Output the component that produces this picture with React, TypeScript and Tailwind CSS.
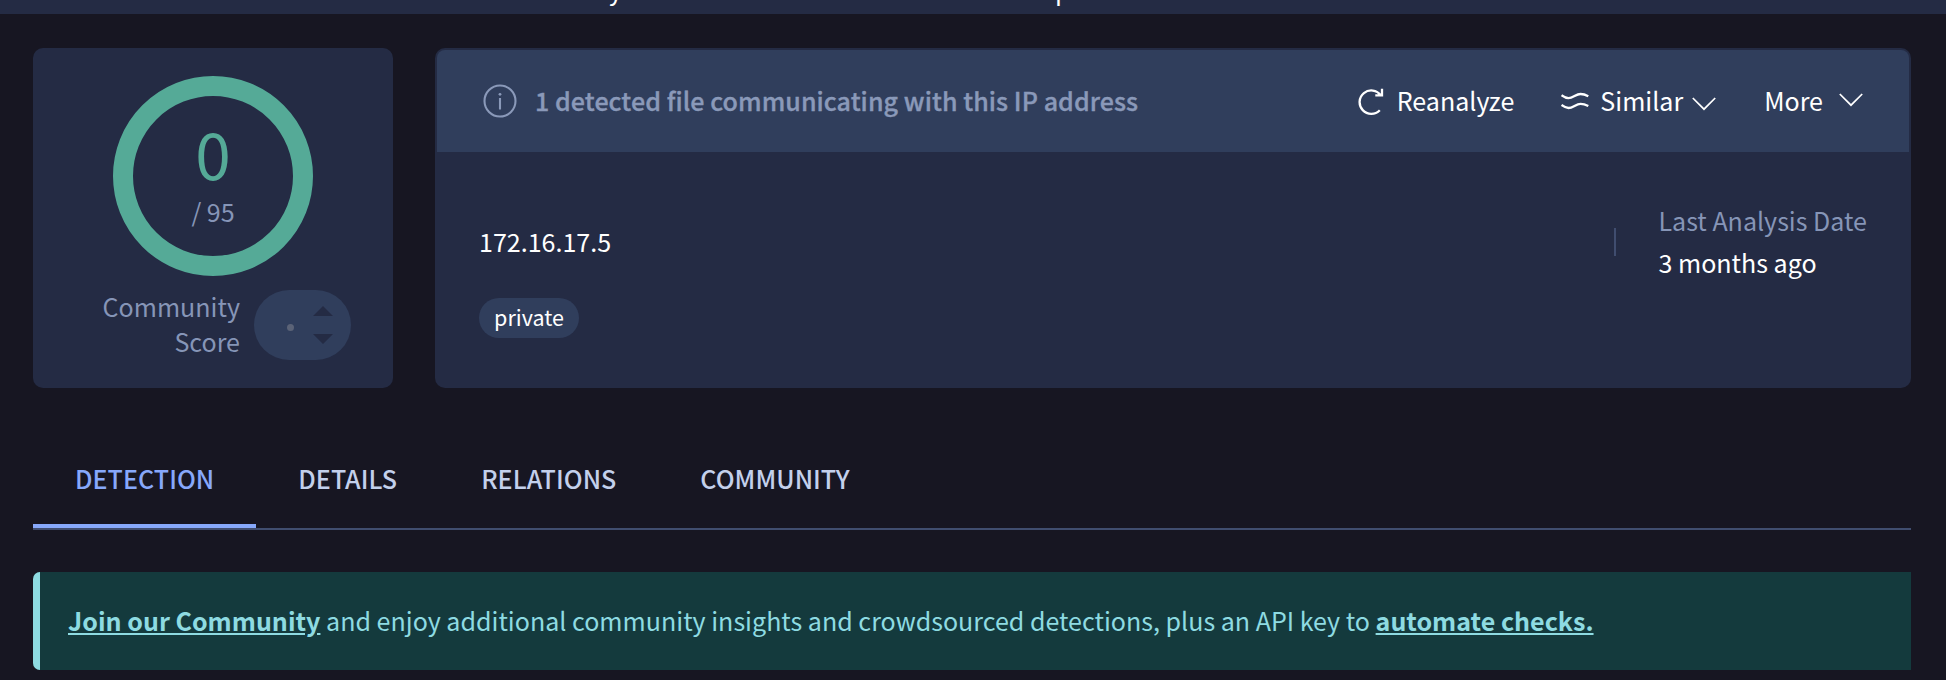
import type { ReactNode } from "react";

function Chevron() {
  return (
    <svg width="24" height="14" viewBox="0 0 24 14" fill="none" stroke="#fff" strokeWidth="1.7">
      <path d="M.8 1 12 12.2 23.2 1" />
    </svg>
  );
}

function Tab({ children, active = false }: { children: ReactNode; active?: boolean }) {
  return (
    <div className={active ? "flex h-[94px] items-center border-b-4 border-[#87a8fb] px-[42px] pb-[2px] text-[#87a8fb]" : "flex h-[94px] items-center border-b-4 border-transparent px-[42px] pb-[2px]"}>
      {children}
    </div>
  );
}

export default function App() {
  return (
    <div className="flex h-[680px] w-[1946px] flex-col overflow-hidden bg-[#171622] font-['Noto_Sans_CJK_SC',sans-serif] text-[25.05px] leading-[35px] text-white">
      <header className="flex h-[14px] shrink-0 items-end overflow-hidden bg-[#242b44] pb-[7px] pl-[609px]">
        <span className="w-[446px]">y</span>
        <span>p</span>
      </header>
      <div className="mt-[34px] flex h-[340px] shrink-0 gap-[42px] pl-[33px] pr-[35px]">
        <section className="flex w-[360px] flex-col items-center rounded-[10px] bg-[#242b44] pt-7">
          <div className="flex size-[200px] flex-col items-center rounded-full border-[20px] border-[#55aa97]">
            <span className="mt-[21px] text-[64px] leading-[70px] text-[#55aa97]">0</span>
            <span className="mt-[7px] text-[#8695b7]">/ 95</span>
          </div>
          <div className="mt-[14px] flex w-full items-center justify-end gap-[14px] pr-[42px]">
            <p className="-mt-[2px] text-right text-[#8695b7]">Community<br />Score</p>
            <div className="flex h-[70px] w-[97px] items-center justify-end gap-[19px] rounded-full bg-[#303e5c] pr-[18px]">
              <span className="mt-[5px] size-[7px] rounded-full bg-[#5b6377]" />
              <svg width="20" height="38" viewBox="0 0 20 38" fill="#242b44">
                <path d="M0 10 10 0 20 10ZM0 28 10 38 20 28Z" />
              </svg>
            </div>
          </div>
        </section>
        <section className="flex min-w-0 flex-1 flex-col overflow-hidden rounded-[10px] bg-[#242b44]">
          <div className="mx-[2px] mt-[2px] flex h-[102px] shrink-0 items-center rounded-t-[8px] bg-[#303e5c] pl-[46px]">
            <svg width="34" height="34" viewBox="0 0 34 34" fill="none" stroke="#8a99b9" strokeWidth="2.1">
              <circle cx="17" cy="17" r="15.5" />
              <path d="M17 14V25.5" />
              <circle cx="17" cy="10.3" r="1.4" fill="#8a99b9" stroke="none" />
            </svg>
            <span className="-mt-[2px] ml-[18px] font-medium tracking-[0.06px] text-[#8a99b9] [-webkit-text-stroke:0.35px_#8a99b9]">1 detected file communicating with this IP address</span>
            <div className="ml-auto flex items-center pr-[46px]">
              <svg width="28" height="28" viewBox="0 0 28 28" fill="none" stroke="#fff" strokeWidth="2.3">
                <path d="M22.8 23.2A11.7 11.7 0 1 1 23.8 8.3M25 1.7V8.3H18.3" />
              </svg>
              <span className="-mt-[2px] ml-[12px]">Reanalyze</span>
              <svg className="ml-[47px]" width="28" height="20" viewBox="0 0 28 20" fill="none" stroke="#fff" strokeWidth="2.3">
                <path d="M.5 4.2C3 6 5 7.2 7.5 7.2 12 7.2 15 3 19.5 3 22.5 3 25 4 27.3 5.2M.5 14C3 15.8 5 17 7.5 17 12 17 15 12.8 19.5 12.8 22.5 12.8 25 13.8 27.3 15" />
              </svg>
              <span className="-mt-[2px] ml-[11px] mr-[9px]">Similar</span>
              <span className="mt-[5px] flex"><Chevron /></span>
              <span className="-mt-[2px] ml-[48px] mr-[16px]">More</span>
              <span className="-mt-[2px] flex"><Chevron /></span>
            </div>
          </div>
          <div className="flex flex-1 justify-between px-[44px]">
            <div className="flex flex-col items-start pt-[72px]">
              <span>172.16.17.5</span>
              <span className="mt-[39px] flex h-10 w-[100px] items-center justify-center rounded-full bg-[#303e5c] pb-[3px] text-[21.5px]">private</span>
            </div>
            <div className="flex items-start pt-[47px]">
              <span className="mr-[42px] mt-[29px] h-7 w-[2px] bg-[#404d6f]" />
              <p className="leading-[42px]"><span className="text-[#8695b7]">Last Analysis Date</span><br />3 months ago</p>
            </div>
          </div>
        </section>
      </div>
      <nav className="ml-[33px] mr-[35px] mt-[46px] flex h-[96px] shrink-0 border-b-2 border-[#404d6f] font-medium tracking-[0.04px] text-[#c3d0ec]">
        <Tab active>DETECTION</Tab>
        <Tab>DETAILS</Tab>
        <Tab>RELATIONS</Tab>
        <Tab>COMMUNITY</Tab>
      </nav>
      <div className="ml-[33px] mr-[35px] mt-[42px] flex h-[98px] shrink-0 overflow-hidden rounded-l-[7px] bg-[#143a3d] text-[#8edbe2]">
        <div className="w-[7px] bg-[#8edbe2]" />
        <p className="self-center pb-[2px] pl-[28px]">
          <a className="font-bold underline">Join our Community</a> and enjoy additional community insights and crowdsourced detections, plus an API key to <a className="font-bold underline">automate checks.</a>
        </p>
      </div>
    </div>
  );
}
